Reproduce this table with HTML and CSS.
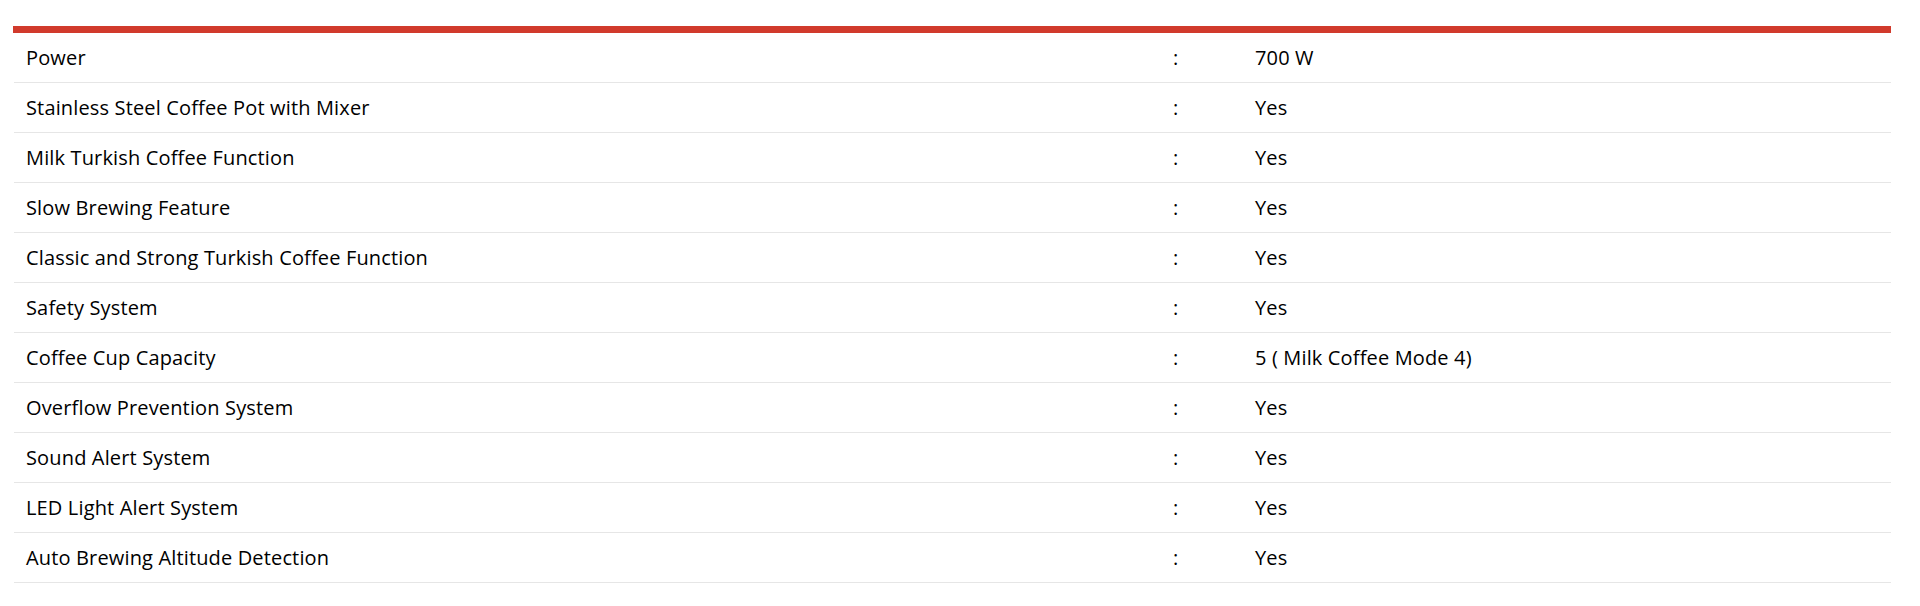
FILE: index.html
```html
<!DOCTYPE html>
<html>
<head>
<meta charset="utf-8">
<link rel="stylesheet" href="styles.css">
</head>
<body>
<div class="page">
  <div class="specs">
    <div class="row"><div class="label">Power</div><div class="sep">:</div><div class="value">700 W</div></div>
    <div class="row"><div class="label">Stainless Steel Coffee Pot with Mixer</div><div class="sep">:</div><div class="value">Yes</div></div>
    <div class="row"><div class="label">Milk Turkish Coffee Function</div><div class="sep">:</div><div class="value">Yes</div></div>
    <div class="row"><div class="label">Slow Brewing Feature</div><div class="sep">:</div><div class="value">Yes</div></div>
    <div class="row"><div class="label">Classic and Strong Turkish Coffee Function</div><div class="sep">:</div><div class="value">Yes</div></div>
    <div class="row"><div class="label">Safety System</div><div class="sep">:</div><div class="value">Yes</div></div>
    <div class="row"><div class="label">Coffee Cup Capacity</div><div class="sep">:</div><div class="value">5 ( Milk Coffee Mode 4)</div></div>
    <div class="row"><div class="label">Overflow Prevention System</div><div class="sep">:</div><div class="value">Yes</div></div>
    <div class="row"><div class="label">Sound Alert System</div><div class="sep">:</div><div class="value">Yes</div></div>
    <div class="row"><div class="label">LED Light Alert System</div><div class="sep">:</div><div class="value">Yes</div></div>
    <div class="row"><div class="label">Auto Brewing Altitude Detection</div><div class="sep">:</div><div class="value">Yes</div></div>
  </div>
</div>
</body>
</html>
```
FILE: styles.css
```css
html, body {
  margin: 0;
  padding: 0;
  background: #ffffff;
}
.page {
  padding: 26px 0 0 13px;
  font-family: "Open Sans", "Liberation Sans", sans-serif;
  font-size: 20px;
  letter-spacing: 0.15px;
  color: #000000;
}
.specs {
  width: 1878px;
  border-top: 7px solid #d13a2c;
}
.row {
  display: grid;
  grid-template-columns: 1159px 82px 1fr;
  height: 49px;
  line-height: 49px;
  border-bottom: 1px solid #e6e6e6;
  margin-left: 1px;
}
.label {
  padding-left: 12px;
  white-space: nowrap;
}
.sep, .value {
  white-space: nowrap;
}
```
